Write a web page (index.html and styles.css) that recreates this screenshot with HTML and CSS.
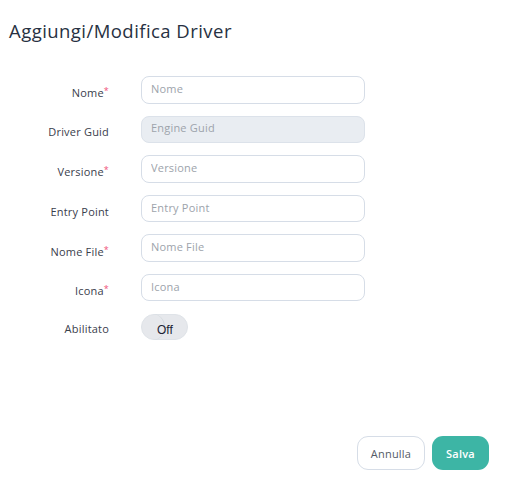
FILE: index.html
```html
<!DOCTYPE html>
<html lang="it">
<head>
<meta charset="utf-8">
<title>Aggiungi/Modifica Driver</title>
<link rel="stylesheet" href="styles.css">
</head>
<body>
<div class="dialog">
  <h1 class="title">Aggiungi/Modifica Driver</h1>
  <form class="form">
    <label class="label">Nome<span class="req">*</span></label>
    <input class="input" type="text" placeholder="Nome">
    <label class="label">Driver Guid</label>
    <input class="input" type="text" placeholder="Engine Guid" disabled>
    <label class="label">Versione<span class="req">*</span></label>
    <input class="input" type="text" placeholder="Versione">
    <label class="label">Entry Point</label>
    <input class="input" type="text" placeholder="Entry Point">
    <label class="label">Nome File<span class="req">*</span></label>
    <input class="input" type="text" placeholder="Nome File">
    <label class="label">Icona<span class="req">*</span></label>
    <input class="input" type="text" placeholder="Icona">
    <label class="label label-toggle">Abilitato</label>
    <div class="toggle"><span class="knob"></span><span class="toggle-text">Off</span></div>
  </form>
  <div class="actions">
    <button class="btn btn-cancel" type="button">Annulla</button>
    <button class="btn btn-save" type="button">Salva</button>
  </div>
</div>
</body>
</html>
```
FILE: styles.css
```css
* { box-sizing: border-box; }
html, body { margin: 0; padding: 0; background: #fff; }
body {
  font-family: "Open Sans", "Noto Sans", sans-serif;
  color: #2f3542;
  width: 511px;
  height: 485px;
}
.dialog {
  display: flex;
  flex-direction: column;
  height: 485px;
  padding: 19px 22px 15px 9px;
}
.title {
  margin: 0;
  font-size: 18.5px;
  font-weight: 500;
  line-height: 24px;
  color: #273142;
  letter-spacing: 0.45px;
}
.form {
  display: grid;
  grid-template-columns: 100px 224px;
  column-gap: 32px;
  row-gap: 12.1px;
  align-items: center;
  margin-top: 33px;
}
.label {
  text-align: right;
  font-size: 11px;
  color: #3a404c;
  padding-top: 5px;
  letter-spacing: 0.2px;
}
.req { color: #f0507a; font-size: 9px; vertical-align: 3px; }
.input {
  height: 27.5px;
  width: 224px;
  border: 1px solid #d6dde7;
  border-radius: 8px;
  padding: 0 9px 3px;
  font-family: inherit;
  font-size: 11px;
  letter-spacing: 0.2px;
  color: #333;
  background: #fff;
  outline: none;
}
.input::placeholder { color: #9da3ab; }
.input:disabled { background: #e9edf2; border-color: #dce2ea; }
.label-toggle { padding-top: 4px; }
.toggle {
  position: relative;
  width: 47px;
  height: 26px;
  border-radius: 13px;
  background: #e6e8ec;
  border: 1px solid #dfe3e8;
  display: flex;
  align-items: center;
  margin-top: 0;
}
.knob {
  position: absolute;
  left: -1px;
  top: -1px;
  width: 24px;
  height: 26px;
  border-radius: 50%;
  border-right: 1px solid #d3d8de;
}
.toggle-text {
  position: relative;
  font-family: "Liberation Sans", Arial, sans-serif;
  font-size: 12px;
  color: #1d2333;
  margin-left: 15px;
  margin-top: 6px;
}
.actions {
  margin-top: auto;
  display: flex;
  justify-content: flex-end;
  gap: 7px;
}
.btn {
  height: 34px;
  border-radius: 11px;
  font-family: inherit;
  font-size: 11px;
  letter-spacing: 0.2px;
  cursor: pointer;
}
.btn-cancel {
  width: 68px;
  background: #fff;
  border: 1px solid #d6dde7;
  color: #555b66;
}
.btn-save {
  width: 57px;
  background: #3db5a5;
  border: none;
  color: #fff;
  font-weight: 600;
}
```
